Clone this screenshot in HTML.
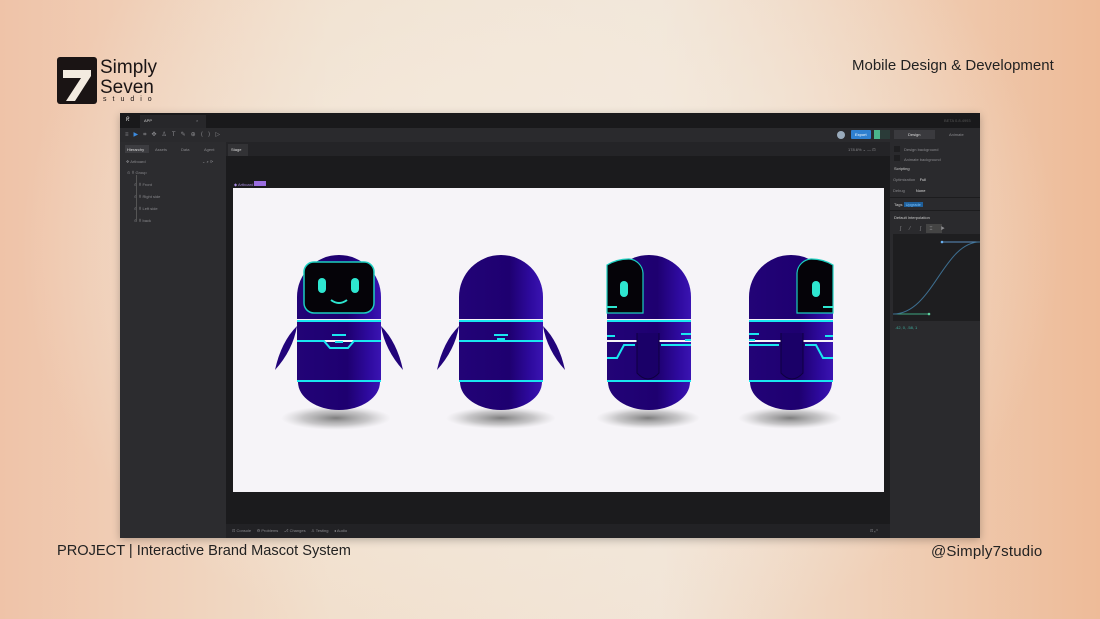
<!DOCTYPE html>
<html><head><meta charset="utf-8"><style>
*{margin:0;padding:0;box-sizing:border-box}
body{width:1100px;height:619px;overflow:hidden;position:relative;font-family:"Liberation Sans",sans-serif;
background:radial-gradient(ellipse 520px 420px at 540px 250px,#f4ebdf 0%,rgba(244,235,223,0.6) 50%,rgba(244,235,223,0) 100%),linear-gradient(90deg,#efc3a8 0%,#f1dfcc 30%,#f1e4d6 60%,#eebb98 100%)}
.abs{position:absolute}
.win{left:120px;top:113px;width:860px;height:425px;background:#1b1b1d;overflow:hidden;box-shadow:0 2px 8px rgba(0,0,0,.25)}
.t{position:absolute;font-size:4px;color:#8a8a8e;white-space:nowrap}
.cap{font-size:15px;color:#222}
</style></head><body>
<!-- logo -->
<div class="abs" style="left:57px;top:57px;width:40px;height:47px;background:#1a1414;border-radius:3px"></div>
<svg class="abs" style="left:57px;top:57px" width="40" height="47"><path d="M6 13 H34 V19 L18 44 H9 L24 21 H6Z" fill="#f3ebe0"/></svg>
<div class="abs" style="left:100px;top:58px;font-size:19px;line-height:20px;color:#1a1414">Simply<br>Seven</div>
<div class="abs" style="left:103px;top:96px;font-size:7px;letter-spacing:6px;color:#1a1414">studio</div>
<div class="abs cap" style="left:852px;top:57px">Mobile Design &amp; Development</div>
<div class="abs cap" style="left:57px;top:543px;font-size:14.6px">PROJECT | Interactive Brand Mascot System</div>
<div class="abs cap" style="left:931px;top:543px;letter-spacing:0.2px">@Simply7studio</div>

<div class="abs win">
 <div class="abs" style="left:0;top:0;width:860px;height:15px;background:#19191b"></div>
 <div class="abs" style="left:20px;top:2px;width:66px;height:13px;background:#27272a"></div>
 <div class="t" style="left:6px;top:4px;color:#ddd;font-size:6px">ᖇ</div>
 <div class="t" style="left:24px;top:5px;color:#ccc">APP</div>
 <div class="t" style="left:76px;top:5px">×</div>
 <div class="t" style="left:824px;top:5px;color:#555">BETA 0.8.4993</div>
 <div class="abs" style="left:0;top:15px;width:860px;height:14px;background:#2a2a2d"></div>
 <div class="t" style="left:5px;top:18px;font-size:6px;letter-spacing:5px">≡<span style="color:#3b8be0">▶</span>⌗✥♙T✎⊕⟨⟩▷</div>
 <div class="abs" style="left:717px;top:18px;width:8px;height:8px;border-radius:50%;background:#9ab"></div>
 <div class="abs" style="left:731px;top:17px;width:20px;height:9px;background:#2f80d0;border-radius:1px"></div>
 <div class="t" style="left:735px;top:19px;color:#fff">Export</div>
 <div class="abs" style="left:754px;top:17px;width:16px;height:9px;background:#2a3b38;border-left:6px solid #4ab48a"></div>
 <div class="abs" style="left:774px;top:17px;width:41px;height:9px;background:#3a3a3e"></div>
 <div class="t" style="left:788px;top:19px;color:#ddd">Design</div>
 <div class="t" style="left:829px;top:19px">Animate</div>
 <!-- left panel -->
 <div class="abs" style="left:0;top:29px;width:106px;height:396px;background:#2c2c2f"></div>
 <div class="abs" style="left:5px;top:32px;width:24px;height:8px;background:#3c3c40"></div>
 <div class="t" style="left:7px;top:34px;color:#ddd">Hierarchy</div>
 <div class="t" style="left:35px;top:34px">Assets</div>
 <div class="t" style="left:61px;top:34px">Data</div>
 <div class="t" style="left:84px;top:34px">Agent</div>
 <div class="t" style="left:6px;top:46px">✥ Artboard</div>
 <div class="t" style="left:82px;top:46px">⌄ ⌕ ⟳</div>
 <div class="t" style="left:7px;top:57px">⊙ ⠿ Group</div>
 <div class="t" style="left:14px;top:69px">⊙ ⠿ Front</div>
 <div class="t" style="left:14px;top:81px">⊙ ⠿ Right side</div>
 <div class="t" style="left:14px;top:93px">⊙ ⠿ Left side</div>
 <div class="t" style="left:14px;top:105px">⊙ ⠿ back</div>
 <div class="abs" style="left:16px;top:62px;width:1px;height:46px;background:#555"></div>
 <!-- stage -->
 <div class="abs" style="left:106px;top:29px;width:664px;height:14px;background:#242427"></div>
 <div class="abs" style="left:108px;top:31px;width:20px;height:12px;background:#323235"></div>
 <div class="t" style="left:111px;top:34px;color:#ddd">Stage</div>
 <div class="t" style="left:728px;top:34px">178.6% ⌄ — ⊡</div>
 <div class="t" style="left:114px;top:69px;color:#a98ce0">◆ Artboard</div>
 <div class="abs" style="left:134px;top:68px;width:12px;height:5px;background:#9a6ee0"></div>
 <div class="abs" style="left:113px;top:75px;width:651px;height:304px;background:#f6f4f8"></div>
 <div class="abs" style="left:106px;top:411px;width:664px;height:14px;background:#222225"></div>
 <div class="t" style="left:112px;top:415px">⊡ Console &nbsp;&nbsp;&nbsp; ⚙ Problems &nbsp;&nbsp;&nbsp; ⎇ Changes &nbsp;&nbsp;&nbsp; ♙ Testing &nbsp;&nbsp;&nbsp; ◂ Audio</div>
 <div class="t" style="left:750px;top:415px">⊡ ⤢</div>
 <!-- right panel -->
 <div class="abs" style="left:770px;top:29px;width:90px;height:396px;background:#2a2a2d"></div>
 <div class="abs" style="left:774px;top:33px;width:6px;height:6px;background:#1e1e20"></div>
 <div class="t" style="left:784px;top:34px">Design background</div>
 <div class="abs" style="left:774px;top:42px;width:6px;height:6px;background:#1e1e20"></div>
 <div class="t" style="left:784px;top:44px">Animate background</div>
 <div class="t" style="left:774px;top:53px;color:#ccc">Scripting</div>
 <div class="t" style="left:773px;top:64px">Optimization &nbsp;&nbsp;&nbsp;<span style="color:#ddd">Full</span></div>
 <div class="t" style="left:773px;top:75px">Debug &nbsp;&nbsp;&nbsp;&nbsp;&nbsp;&nbsp;&nbsp;&nbsp;&nbsp;<span style="color:#ddd">None</span></div>
 <div class="abs" style="left:770px;top:84px;width:90px;height:1px;background:#1c1c1e"></div>
 <div class="t" style="left:774px;top:89px;color:#ccc">Tags <span style="background:#1f5f9a;color:#7cc4ff;padding:0 2px">Upgrade</span></div>
 <div class="abs" style="left:770px;top:97px;width:90px;height:1px;background:#1c1c1e"></div>
 <div class="t" style="left:774px;top:102px;color:#ccc">Default Interpolation</div>
 <div class="abs" style="left:806px;top:111px;width:16px;height:9px;background:#444"></div>
 <div class="t" style="left:780px;top:113px;font-size:5px">ʃ &nbsp;&nbsp;&nbsp;&nbsp; ⁄ &nbsp;&nbsp;&nbsp;&nbsp;&nbsp; ʃ &nbsp;&nbsp;&nbsp;&nbsp; ⌶ &nbsp;&nbsp;&nbsp;&nbsp; ▶</div>
 <div class="abs" style="left:773px;top:121px;width:87px;height:87px;background:#1e1e20"></div>
 <svg class="abs" style="left:773px;top:121px" width="87" height="87"><path d="M0 80 H36" stroke="#3fa580" stroke-width="1"/><path d="M49 8 H87" stroke="#5a8fc0" stroke-width="1"/><path d="M0 80 C40 80 50 8 87 8" stroke="#3d6e90" fill="none" stroke-width="1"/><circle cx="36" cy="80" r="1.3" fill="#5fd0a0"/><circle cx="49" cy="8" r="1.3" fill="#6ab0f0"/></svg>
 <div class="t" style="left:775px;top:212px;color:#3fb0a0">.42, 0, .58, 1</div>
</div>

<svg class="abs" style="left:233px;top:188px" width="651" height="304" viewBox="233 188 651 304">
<defs>
 <linearGradient id="bg" x1="0" x2="1"><stop offset="0" stop-color="#220377"/><stop offset=".6" stop-color="#1e0070"/><stop offset=".85" stop-color="#2e0a9e"/><stop offset="1" stop-color="#3a14b2"/></linearGradient>
 <radialGradient id="sh"><stop offset="0" stop-color="#777" stop-opacity=".95"/><stop offset=".6" stop-color="#999" stop-opacity=".5"/><stop offset="1" stop-color="#bbb" stop-opacity="0"/></radialGradient>
 <g id="body">
  <path d="M0 42 A42 42 0 0 1 84 42 V64 H0Z" fill="url(#bg)"/>
  <rect x="0" y="67" width="84" height="18" fill="url(#bg)"/>
  <rect x="0" y="87" width="84" height="38" fill="url(#bg)"/>
  <path d="M1 127 H83 V127 A41 28 0 0 1 1 127Z" fill="url(#bg)"/>
  <rect x="0" y="65" width="84" height="2" fill="#19e6f0"/>
  <rect x="0" y="125" width="84" height="2" fill="#19e6f0"/>
 </g>
 <path id="arm" d="M22 0 Q6 16 0 44 Q18 24 22 0Z" fill="#22037a"/>
</defs>
<ellipse cx="336" cy="418" rx="55" ry="12" fill="url(#sh)"/>
<ellipse cx="501" cy="418" rx="55" ry="11" fill="url(#sh)"/>
<ellipse cx="648" cy="418" rx="52" ry="11" fill="url(#sh)"/>
<ellipse cx="790" cy="418" rx="52" ry="11" fill="url(#sh)"/>
<g transform="translate(297,255)">
 <use href="#arm" transform="translate(-22,71)"/>
 <use href="#arm" transform="translate(106,71) scale(-1,1)"/>
 <use href="#body"/>
 <rect x="7" y="7" width="70" height="51" rx="10" fill="#050308" stroke="#1ccfc0" stroke-width="1.5"/>
 <rect x="21" y="23" width="8" height="15" rx="4" fill="#2ee6d0"/>
 <rect x="54" y="23" width="8" height="15" rx="4" fill="#2ee6d0"/>
 <path d="M34 45 Q42 51 50 45" stroke="#2ee6d0" stroke-width="2" fill="none"/>
 <path d="M0 86 H27 L33 93 H51 L57 86 H84" stroke="#19e6f0" stroke-width="2" fill="none"/>
 <rect x="35" y="79" width="14" height="2" fill="#19e6f0"/>
 <rect x="38" y="86" width="8" height="2" fill="#19e6f0"/>
</g>
<g transform="translate(459,255)">
 <use href="#arm" transform="translate(-22,71)"/>
 <use href="#arm" transform="translate(106,71) scale(-1,1)"/>
 <use href="#body"/>
 <rect x="0" y="85" width="84" height="2" fill="#19e6f0"/>
 <rect x="35" y="79" width="14" height="2" fill="#19e6f0"/>
 <rect x="38" y="83" width="8" height="2" fill="#19e6f0"/>
</g>
<g transform="translate(607,255)">
 <use href="#body"/>
 <path d="M0 10 A42 42 0 0 1 22 4 A15 15 0 0 1 36 18 V58 H0Z" fill="#050308" stroke="#1ccfc0" stroke-width="1.2"/>
 <rect x="13" y="26" width="8" height="16" rx="4" fill="#2ee6d0"/>
 <rect x="0" y="51" width="10" height="2" fill="#2ee6d0"/>
 <path d="M0 103 H10 L17 90 H28 M54 90 H84" stroke="#19e6f0" stroke-width="2" fill="none"/>
 <rect x="0" y="80" width="8" height="2" fill="#19e6f0"/><rect x="74" y="78" width="10" height="2" fill="#19e6f0"/><rect x="78" y="84" width="6" height="2" fill="#19e6f0"/>
 <path d="M30 78 V118 Q41 130 52 118 V78" fill="#1a0068" stroke="#0e0040" stroke-width="1"/>
</g>
<g transform="translate(749,255)">
 <use href="#body"/>
 <path d="M84 10 A42 42 0 0 0 62 4 A15 15 0 0 0 48 18 V58 H84Z" fill="#050308" stroke="#1ccfc0" stroke-width="1.2"/>
 <rect x="63" y="26" width="8" height="16" rx="4" fill="#2ee6d0"/>
 <rect x="74" y="51" width="10" height="2" fill="#2ee6d0"/>
 <path d="M84 103 H74 L67 90 H56 M30 90 H0" stroke="#19e6f0" stroke-width="2" fill="none"/>
 <rect x="0" y="78" width="10" height="2" fill="#19e6f0"/><rect x="0" y="84" width="6" height="2" fill="#19e6f0"/><rect x="76" y="80" width="8" height="2" fill="#19e6f0"/>
 <path d="M32 78 V118 Q43 130 54 118 V78" fill="#1a0068" stroke="#0e0040" stroke-width="1"/>
</g>
</svg>
</body></html>
